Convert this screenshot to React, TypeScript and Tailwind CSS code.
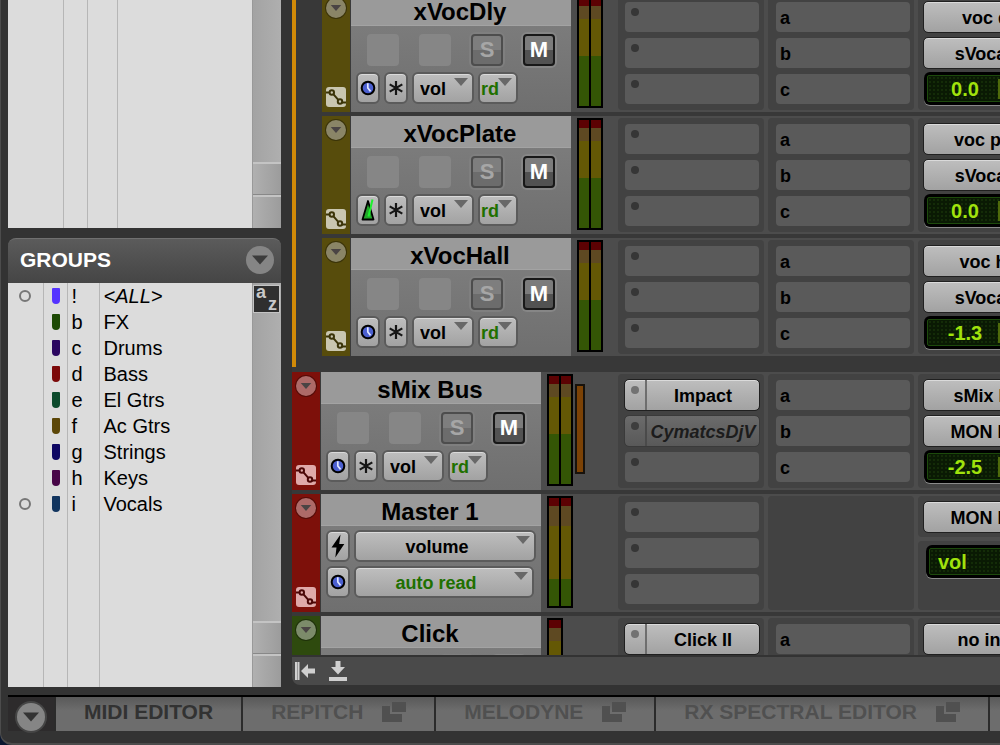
import React from 'react';
import clsx from 'clsx';

type TimebaseKind = 'clock' | 'metronome';
type StripColor = 'olive' | 'red' | 'green';

interface Insert {
    name: string;
    inactive?: boolean;
}

interface Track {
    name: string;
    color: StripColor;
    timebase: TimebaseKind;
    inserts: (Insert | null)[];
    io: string[];
    volume?: string;
    master?: boolean;
    mono?: boolean;
    compression?: boolean;
}

interface Group {
    id: string;
    name: string;
    swatch: string;
    marked?: boolean;
}

const FOLDER_TRACKS: Track[] = [
    { name: 'xVocDly', color: 'olive', timebase: 'clock', inserts: [null, null, null], io: ['voc dly', 'sVocals1'], volume: '0.0' },
    { name: 'xVocPlate', color: 'olive', timebase: 'metronome', inserts: [null, null, null], io: ['voc plate', 'sVocals1'], volume: '0.0' },
    { name: 'xVocHall', color: 'olive', timebase: 'clock', inserts: [null, null, null], io: ['voc hall', 'sVocals1'], volume: '-1.3' },
];

const TRACKS: Track[] = [
    { name: 'sMix Bus', color: 'red', timebase: 'clock', inserts: [{ name: 'Impact' }, { name: 'CymatcsDjV', inactive: true }, null], io: ['sMix Bus', 'MON BUS'], volume: '-2.5', compression: true },
    { name: 'Master 1', color: 'red', timebase: 'clock', inserts: [null, null, null], io: ['MON BUS'], master: true },
    { name: 'Click', color: 'green', timebase: 'clock', inserts: [{ name: 'Click II' }, null, null], io: ['no input', 'MON BUS'], volume: '0.0', mono: true },
];

const GROUPS: Group[] = [
    { id: '!', name: '<ALL>', swatch: 'bg-[#5533ff]', marked: true },
    { id: 'b', name: 'FX', swatch: 'bg-[#1d4a05]' },
    { id: 'c', name: 'Drums', swatch: 'bg-[#2b0660]' },
    { id: 'd', name: 'Bass', swatch: 'bg-[#7c0a0a]' },
    { id: 'e', name: 'El Gtrs', swatch: 'bg-[#0c4a2c]' },
    { id: 'f', name: 'Ac Gtrs', swatch: 'bg-[#5c4708]' },
    { id: 'g', name: 'Strings', swatch: 'bg-[#0d0662]' },
    { id: 'h', name: 'Keys', swatch: 'bg-[#480648]' },
    { id: 'i', name: 'Vocals', swatch: 'bg-[#12355f]', marked: true },
];

const EDITOR_TABS = ['REPITCH', 'MELODYNE', 'RX SPECTRAL EDITOR'];

const STRIP: Record<StripColor, { bar: string; circle: string; icon: string; ink: string }> = {
    olive: { bar: 'bg-[#574c0c]', circle: 'bg-[#8a8567]', icon: 'bg-[#c9c6b0]', ink: 'text-[#3b3408]' },
    red: { bar: 'bg-[#7d100a]', circle: 'bg-[#ad6a68]', icon: 'bg-[#dfa9a9]', ink: 'text-[#4a0606]' },
    green: { bar: 'bg-[#2e4a0e]', circle: 'bg-[#7c8b6a]', icon: 'bg-[#b5c2a5]', ink: 'text-[#1e3008]' },
};

const FACE = 'bg-linear-to-b from-[#bebebe] to-[#a2a2a2] text-black';
const CONTROL = 'h-8 rounded-md border-2 border-[#5b5b5b] shadow-[inset_0_1px_0_#dadada]';

const Triangle: React.FC<{ className?: string }> = ({ className }) => (
    <svg viewBox="0 0 14 8" className={clsx('w-3.5 h-2', className)} fill="currentColor" aria-hidden="true">
        <path d="M0 0h14L7 8z" />
    </svg>
);

const ClockIcon = () => (
    <svg viewBox="0 0 16 16" className="size-4 shrink-0" aria-hidden="true">
        <circle cx="8" cy="8" r="6.3" fill="#4b5fd0" stroke="#000" strokeWidth="2" />
        <path d="M7.800 3.200V8l2.800 3.400" fill="none" stroke="#dfe6ff" strokeWidth="1.700" />
    </svg>
);

const MetronomeIcon = () => (
    <svg viewBox="0 0 16 24" className="w-4 h-6 shrink-0" aria-hidden="true">
        <path d="M8 3L13.5 21.5H2.5z" fill="#22a52a" stroke="#000" strokeWidth="1.8" strokeLinejoin="round" />
        <path d="M8.500 18.500L12.500 1.500" stroke="#1cf22c" strokeWidth="2" />
    </svg>
);

const AsteriskIcon = () => (
    <svg viewBox="0 0 16 16" className="size-4 shrink-0" stroke="#161616" strokeWidth="2.2" aria-hidden="true">
        <path d="M8 1v14M1.700 4.400l12.600 7.200M14.300 4.400L1.700 11.600" />
    </svg>
);

const BoltIcon = () => (
    <svg viewBox="0 0 16 24" className="w-4 h-6 shrink-0" aria-hidden="true">
        <path d="M10.5 0.5L1.5 13.5h5L5.3 23.5l9-13.5H9.2z" fill="#000" />
    </svg>
);

const AutomationIcon = () => (
    <svg viewBox="0 0 20 20" className="size-5" fill="none" stroke="currentColor" strokeWidth="2" aria-hidden="true">
        <path d="M0 5.500h3.500M7.300 7.200l5 5.600M16 15.500h4" />
        <circle cx="5.800" cy="5.500" r="2.200" />
        <circle cx="14" cy="14.500" r="2.200" />
    </svg>
);

const PopOutIcon = () => (
    <svg viewBox="0 0 24 20" className="w-6 h-5" fill="currentColor" aria-hidden="true">
        <path d="M10 0h14v10H10z" />
        <path d="M0 4h8v8h12v8H0z" />
    </svg>
);

const Meter: React.FC<{ bars: number; master?: boolean }> = ({ bars, master }) => (
    <div className="h-28 mt-0.5 ml-1.5 p-0.5 flex gap-0.5 bg-black">
        {Array.from({ length: bars }, (_, i) => (
            <div key={i} className={clsx('flex flex-col', bars === 1 ? 'w-3' : 'w-2.5')}>
                <div className="h-2 bg-[#5c0203]" />
                <div className={clsx('bg-[#5e4922]', master ? 'h-5' : 'h-[13px]')} />
                <div className={clsx('bg-[#645805]', master ? 'h-[53px]' : 'h-[37px]')} />
                <div className="flex-1 bg-[#345605]" />
            </div>
        ))}
    </div>
);

const Dropdown: React.FC<{ label: string; value: string; className: string }> = ({ label, value, className }) => (
    <div className="relative">
        <select aria-label={label} defaultValue={value} className={clsx('appearance-none pt-0.5 text-lg leading-6 font-bold', CONTROL, FACE, className)}>
            <option>{value}</option>
        </select>
        <Triangle className="absolute right-1.5 top-1.5 text-[#686868] pointer-events-none" />
    </div>
);

const IconButton: React.FC<{ label: string; children: React.ReactNode }> = ({ label, children }) => (
    <button aria-label={label} className={clsx('w-6 flex items-center justify-center', CONTROL, FACE)}>{children}</button>
);

const InsertSlot: React.FC<{ insert: Insert | null; index: number }> = ({ insert, index }) => {
    if (!insert) {
        return (
            <button aria-label={`Insert ${index + 1}`} className="w-[134px] h-[30px] pl-1.5 pt-1.5 flex rounded-[4px] bg-[#5a5a5a]">
                <span className="size-2 rounded-full bg-[#363636]" />
            </button>
        );
    }
    return (
        <div className={clsx('w-[134px] h-[30px] flex rounded-[4px] outline-1', insert.inactive
            ? 'bg-linear-to-b from-[#6b6b6b] to-[#595959] text-[#1c1c1c] outline-[#3a3a3a]'
            : 'bg-linear-to-b from-[#bebebe] to-[#a2a2a2] text-black outline-[#202020] shadow-[inset_0_1px_0_#dadada]')}>
            <button aria-label="Insert menu" className={clsx('w-[22px] pl-1.5 pt-1.5 flex items-start border-r-2', insert.inactive ? 'border-[#4a4a4a]' : 'border-[#6e6e6e]')}>
                <span className={clsx('size-2 rounded-full', insert.inactive ? 'bg-[#3d3d3d]' : 'bg-[#727272]')} />
            </button>
            <button className={clsx('flex-1 min-w-0 pt-0.5 flex justify-center items-center text-lg leading-6 font-bold', insert.inactive && 'italic')}>{insert.name}</button>
        </div>
    );
};

const Display: React.FC<{ children: React.ReactNode }> = ({ children }) => (
    <div className="w-[138px] h-[33px] p-[3px] rounded-md bg-black shadow-[0_1px_0_#8a8a8a]">
        <div className="h-full flex items-center rounded-[2px] border border-[#1d4a0c] bg-[#0a1a04] bg-[radial-gradient(#142c08_1px,transparent_1px)] bg-[size:4px_4px] text-[#a0e20c] text-xl leading-6 font-bold">
            {children}
        </div>
    </div>
);

const IoButton: React.FC<{ name: string }> = ({ name }) => (
    <button className={clsx('w-[138px] h-[30px] pt-0.5 shrink-0 rounded-[4px] outline-1 outline-[#202020] shadow-[inset_0_1px_0_#dadada] text-lg leading-6 font-bold', FACE)}>{name}</button>
);

const TrackControls: React.FC<{ track: Track }> = ({ track }) => {
    const timebaseIcon = track.timebase === 'clock' ? <ClockIcon /> : <MetronomeIcon />;

    if (track.master) {
        return (
            <div className="pt-1 pl-[5px] flex flex-col gap-1">
                <div className="flex gap-1">
                    <IconButton label="Elastic audio"><BoltIcon /></IconButton>
                    <Dropdown label="Track view" value="volume" className="w-[182px] pr-4 text-center" />
                </div>
                <div className="flex gap-1">
                    <IconButton label="Timebase">{timebaseIcon}</IconButton>
                    <Dropdown label="Automation mode" value="auto read" className="w-[180px] pr-4 text-center text-[#1f7000]!" />
                </div>
            </div>
        );
    }

    return (
        <>
            <div className="pt-2 pl-4 flex gap-5">
                <div className="size-8 rounded-[4px] bg-[#868686]" />
                <div className="size-8 rounded-[4px] bg-[#868686]" />
                <button className="size-8 rounded-[4px] border-2 border-[#4d4d4d] ring-2 ring-[#7f7f7f] bg-linear-to-b from-[#7e7e7e] from-50% to-[#6c6c6c] to-50% text-[22px] leading-7 font-bold text-[#a6a6a6]">S</button>
                <button className="size-8 rounded-[4px] border-2 border-[#181818] ring-2 ring-[#868686] bg-linear-to-b from-[#7c7c7c] from-50% to-[#525252] to-50% text-[22px] leading-7 font-bold text-white flex justify-center">M</button>
            </div>
            <div className="pt-1.5 pl-[5px] flex gap-1">
                <IconButton label="Timebase">{timebaseIcon}</IconButton>
                <IconButton label="Freeze"><AsteriskIcon /></IconButton>
                <Dropdown label="Track view" value="vol" className="w-[62px] pl-1.5" />
                <Dropdown label="Automation mode" value="rd" className="w-10 pl-px text-[#1f7000]!" />
            </div>
        </>
    );
};

const TrackRow: React.FC<{ track: Track; nested?: boolean }> = ({ track, nested }) => {
    const strip = STRIP[track.color];
    return (
        <section className="h-[118px] shrink-0 flex bg-[#4c4c4c]">
            <div className={clsx('flex shrink-0', nested ? 'w-[296px]' : 'w-[326px]')}>
                <div className={clsx('w-7 pt-1 pb-[5px] flex flex-col items-center justify-between', strip.bar)}>
                    <button aria-label="Track options" className={clsx('size-5 rounded-full flex items-center justify-center text-[#4a4444] shadow-[0_0_0_1px_#0005]', strip.circle)}>
                        <Triangle className="w-3! h-1.5!" />
                    </button>
                    <button aria-label="Show automation" className={clsx('size-5 rounded-[3px]', strip.icon, strip.ink)}><AutomationIcon /></button>
                </div>
                <div className="w-px bg-[#3a3a3a]" />
                <div className="w-[220px] bg-linear-to-b from-[#808080] to-[#6f6f6f]">
                    <h2 className="h-8 pt-0.5 pr-0.5 text-2xl leading-8 font-bold text-center text-black bg-[#9a9a9a] border-b border-[#a3a3a3]">{track.name}</h2>
                    <TrackControls track={track} />
                </div>
                <Meter bars={track.mono ? 1 : 2} master={track.master} />
                {track.compression && <div className="w-2.5 h-[90px] mt-3 ml-0.5 border-2 border-[#17120c] bg-[#7c4205]" />}
            </div>
            <div className="flex gap-1 pt-0.5">
                <div className="w-[146px] h-[114px] pl-[7px] pt-1.5 flex flex-col gap-1.5 rounded-[4px] bg-[#424242]">
                    {track.inserts.map((insert, i) => <InsertSlot key={i} insert={insert} index={i} />)}
                </div>
                <div className="w-[146px] h-[114px] pl-2 pt-1.5 flex flex-col gap-1.5 rounded-[4px] bg-[#424242]">
                    {!track.master && ['a', 'b', 'c'].map(send => (
                        <button key={send} className="w-[134px] h-[30px] pl-1 pt-0.5 rounded-[4px] bg-[#5a5a5a] text-left text-lg leading-6 font-bold text-black">{send}</button>
                    ))}
                </div>
                {track.master ? (
                    <div className="flex flex-col gap-1">
                        <div className="w-[150px] h-[41px] pl-1.5 pt-1.5 rounded-[4px] bg-[#424242]"><IoButton name={track.io[0]} /></div>
                        <div className="w-[150px] flex-1 mb-0.5 pl-2 pt-1 rounded-[4px] bg-[#424242]"><Display><span className="pl-2">vol</span></Display></div>
                    </div>
                ) : (
                    <div className="w-[150px] h-[114px] pl-1.5 pt-1.5 flex flex-col gap-1 rounded-[4px] bg-[#424242]">
                        <div className="flex flex-col gap-1.5">
                            {track.io.map(name => <IoButton key={name} name={name} />)}
                        </div>
                        <Display>
                            <span className="w-[70px] pl-1 text-center">{track.volume}</span>
                            <span className="w-1 h-5 bg-[#4f6a0b]" />
                        </Display>
                    </div>
                )}
            </div>
        </section>
    );
};

const ScrollRail: React.FC<{ children?: React.ReactNode }> = ({ children }) => (
    <div className="w-[29px] flex flex-col border-l border-[#999999] bg-linear-to-r from-[#a3a3a3] to-[#afafaf]">
        {children}
        <div className="flex-1" />
        <button aria-label="Scroll up" className="h-[33px] border-t-2 border-[#c4c4c4] bg-linear-to-r from-[#b0b0b0] to-[#9c9c9c]" />
        <button aria-label="Scroll down" className="h-[33px] border-t-2 border-[#c4c4c4] bg-linear-to-r from-[#b0b0b0] to-[#9c9c9c] shadow-[0_-1px_0_#888888]" />
    </div>
);

const Sidebar = () => (
    <aside className="w-[273px] shrink-0 flex flex-col">
        <div className="h-[228px] flex">
            <div className="flex-1 flex bg-[#dcdcdc]">
                <div className="w-14 border-r border-[#b6b6b6]" />
                <div className="w-6 border-r border-[#b6b6b6]" />
                <div className="w-[30px] border-r border-[#b6b6b6]" />
            </div>
            <ScrollRail />
        </div>
        <div className="h-[45px] mt-2.5 pb-0.5 pl-3 pr-[7px] flex items-center justify-between rounded-t-lg border-t border-[#707070] bg-linear-to-b from-[#5b5b5b] to-[#454545]">
            <h2 className="text-[21px] leading-6 font-bold text-white">GROUPS</h2>
            <button aria-label="Groups menu" className="size-7 rounded-full flex items-center justify-center bg-[#858585] text-[#3c3c3c]">
                <Triangle className="w-4! h-2.5!" />
            </button>
        </div>
        <div className="flex-1 min-h-0 flex">
            <div className="flex-1 bg-[#dcdcdc]">
                <table className="w-full h-full table-fixed text-xl leading-6 text-black">
                    <colgroup>
                        <col className="w-[35px]" />
                        <col className="w-6" />
                        <col className="w-8" />
                        <col />
                    </colgroup>
                    <tbody>
                        {GROUPS.map(group => (
                            <tr key={group.id} className="h-[26px]">
                                <td className="border-r border-[#b6b6b6]">
                                    {group.marked && <span className="block size-3 mx-auto rounded-full border-2 border-[#777777]" />}
                                </td>
                                <td className="border-r border-[#b6b6b6]">
                                    <span className={clsx('block w-2 h-4 ml-2 rounded-b-[4px] rounded-t-[1px]', group.swatch)} />
                                </td>
                                <td className="border-r border-[#b6b6b6] pl-1">{group.id}</td>
                                <td className={clsx('pl-1', group.id === '!' && 'italic')}>{group.name}</td>
                            </tr>
                        ))}
                        <tr>
                            <td className="border-r border-[#b6b6b6]" />
                            <td className="border-r border-[#b6b6b6]" />
                            <td className="border-r border-[#b6b6b6]" />
                            <td />
                        </tr>
                    </tbody>
                </table>
            </div>
            <ScrollRail>
                <button aria-label="Sort groups" className="w-[27px] h-7 mt-0.5 relative bg-[#2f2f2f] border border-[#c4c4c4] text-[#c9c9c9] font-bold">
                    <span className="absolute left-0.5 -top-1.5 text-lg leading-6">a</span>
                    <span className="absolute right-0.5 bottom-0 text-lg leading-4">z</span>
                </button>
            </ScrollRail>
        </div>
    </aside>
);

const Toolbar = () => (
    <div className="h-[30px] shrink-0 border-t-2 border-[#333333] rounded-bl-lg bg-[#4a4a4a] pl-[3px] flex items-center gap-3.5 text-[#cfcfcf]">
        <button aria-label="Collapse left">
            <svg viewBox="0 0 20 20" className="size-5" fill="currentColor">
                <path d="M0 1h4.500v18H0zM6 10l7-7v4.500h7v5h-7V17z" />
                <path d="M2.200 1h.8v18h-.8z" fill="#8a8a8a" />
            </svg>
        </button>
        <button aria-label="Insert below">
            <svg viewBox="0 0 18 20" className="w-[18px] h-5" fill="currentColor">
                <path d="M6.500 0h5v6H16l-7 7.500L2 6h4.500zM0 16h18v4H0z" />
            </svg>
        </button>
    </div>
);

const EditorTabs = () => (
    <nav className="h-9 ml-[7px] flex gap-0.5 border-t-2 border-black bg-[#2b2b2b] text-[21px] leading-6 font-bold whitespace-nowrap">
        <div className="w-[46px] shrink-0 flex items-start justify-center pt-1.5 bg-[#2d2b2c]">
            <button aria-label="Editor menu" className="size-7 shrink-0 rounded-full flex items-center justify-center bg-[#858585] text-[#333333] shadow-[0_0_0_2px_#454545]">
                <Triangle className="w-4! h-2.5!" />
            </button>
        </div>
        <button className="px-7 pb-1 shrink-0 bg-linear-to-b from-[#595959] to-[#6d6d6d] to-40% text-[#323232]">MIDI EDITOR</button>
        {EDITOR_TABS.map(tab => (
            <button key={tab} className="px-7 pb-1 shrink-0 flex items-center gap-[19px] bg-linear-to-b from-[#595959] to-[#6d6d6d] to-40% text-[#505050]">
                {tab}
                <PopOutIcon />
            </button>
        ))}
        <div className="flex-1 bg-linear-to-b from-[#595959] to-[#6d6d6d] to-40%" />
    </nav>
);

const App = () => (
    <div className="h-screen overflow-hidden bg-[#0a1730] font-['Liberation_Sans',sans-serif]">
        <div className="h-full flex flex-col pb-3 bg-[#333333] border-b-2 border-l border-[#4c4c4c] rounded-bl-xl">
            <div className="flex-1 min-h-0 flex">
                <div className="pl-[7px] pb-2 flex"><Sidebar /></div>
                <main className="flex-1 min-w-0 ml-[11px] pb-2.5 flex flex-col">
                    <div className="flex-1 min-h-0 overflow-hidden bg-[#383838]">
                        <div className="-mt-1.5 flex">
                            <div className="w-1 shrink-0 bg-[#d18a08]" />
                            <div className="flex-1 ml-[26px] pb-[11px] flex flex-col gap-1">
                                {FOLDER_TRACKS.map(track => <TrackRow key={track.name} track={track} nested />)}
                            </div>
                        </div>
                        <div className="mt-[5px] flex flex-col gap-1">
                            {TRACKS.map(track => <TrackRow key={track.name} track={track} />)}
                        </div>
                    </div>
                    <Toolbar />
                </main>
            </div>
            <EditorTabs />
        </div>
    </div>
);

export default App;
